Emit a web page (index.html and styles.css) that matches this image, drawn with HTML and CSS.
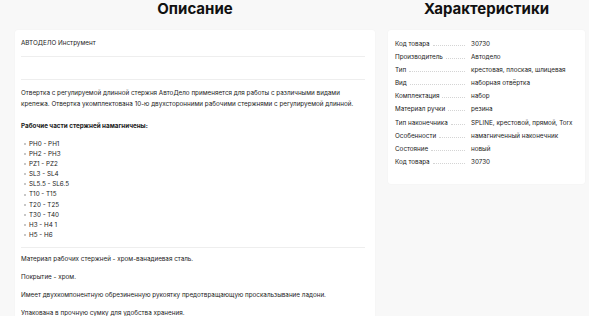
FILE: index.html
```html
<!DOCTYPE html>
<html lang="ru">
<head>
  <meta charset="UTF-8">
  <meta name="viewport" content="width=device-width, initial-scale=1.0">
  <title>Описание и характеристики</title>
  <link rel="stylesheet" href="styles.css">
</head>
<body>
<div class="page">
  <!-- Описание -->
  <div class="col col-desc">
    <h2>Описание</h2>
    <div class="card desc">
      <div class="brand">АВТОДЕЛО Инструмент</div>
      <div class="empty"></div>
      <p class="intro">Отвертка с регулируемой длинной стержня АвтоДело применяется для работы с различными видами крепежа. Отвертка укомплектована 10-ю двухсторонними рабочими стержнями с регулируемой длинной.</p>
      <p class="sub">Рабочие части стержней намагничены:</p>
      <ul class="bits">
        <li>PH0 - PH1</li>
        <li>PH2 - PH3</li>
        <li>PZ1 - PZ2</li>
        <li>SL3 - SL4</li>
        <li>SL5.5 - SL6.5</li>
        <li>T10 - T15</li>
        <li>T20 - T25</li>
        <li>T30 - T40</li>
        <li>H3 - H4 1</li>
        <li>H5 - H6</li>
      </ul>
      <div class="notes">
        <p>Материал рабочих стержней - хром-ванадиевая сталь.</p>
        <p>Покрытие - хром.</p>
        <p>Имеет двухкомпонентную обрезиненную рукоятку предотвращающую проскальзывание ладони.</p>
        <p>Упакована в прочную сумку для удобства хранения.</p>
      </div>
    </div>
  </div>

  <!-- Характеристики -->
  <div class="col col-specs">
    <h2>Характеристики</h2>
    <div class="card specs">
      <div class="row"><span class="key">Код товара</span><span class="val">30730</span></div>
      <div class="row"><span class="key">Производитель</span><span class="val">Автодело</span></div>
      <div class="row"><span class="key">Тип</span><span class="val">крестовая, плоская, шлицевая</span></div>
      <div class="row"><span class="key">Вид</span><span class="val">наборная отвёртка</span></div>
      <div class="row"><span class="key">Комплектация</span><span class="val">набор</span></div>
      <div class="row"><span class="key">Материал ручки</span><span class="val">резина</span></div>
      <div class="row"><span class="key">Тип наконечника</span><span class="val">SPLINE, крестовой, прямой, Torx</span></div>
      <div class="row"><span class="key">Особенности</span><span class="val">намагниченный наконечник</span></div>
      <div class="row"><span class="key">Состояние</span><span class="val">новый</span></div>
      <div class="row"><span class="key">Код товара</span><span class="val">30730</span></div>
    </div>
  </div>
</div>
</body>
</html>
```

FILE: styles.css
```css
body {
  margin: 0;
  background: #f8f8f8;
  font-family: Inter, "Noto Sans", sans-serif;
  color: #222;
  font-size: 6.3px;
}
.page {
  display: flex;
  gap: 13px;
  padding: 0 4px 0 15px;
}
.col-desc {
  width: 360px;
}
.col-specs {
  width: 197px;
}
h2 {
  margin: 0;
  height: 30px;
  line-height: 17px;
  font-size: 15px;
  font-weight: 700;
  text-align: center;
  color: #111;
}
.card {
  background: #fff;
  border-radius: 3px;
  box-shadow: 0 0 2px rgba(0, 0, 0, 0.04);
}
.desc {
  padding: 8px 10px 0 6px;
}
.brand {
  line-height: 10px;
  padding-bottom: 8px;
  border-bottom: 1px solid #eeeeee;
}
.empty {
  height: 22px;
  border-bottom: 1px solid #eeeeee;
}
p {
  margin: 0;
}
.intro {
  margin-top: 8px;
  line-height: 11px;
}
.sub {
  margin-top: 11px;
  font-weight: 700;
  line-height: 11px;
}
.bits {
  list-style: none;
  margin: 7px 0 0;
  padding: 0 0 7px 3px;
  border-bottom: 1px solid #eeeeee;
}
.bits li {
  line-height: 10.1px;
  display: flex;
  align-items: center;
  gap: 3px;
}
.bits li::before {
  content: "";
  width: 2px;
  height: 2px;
  border-radius: 50%;
  background: #b5b5b5;
}
.notes {
  padding: 6px 0 4px;
}
.notes p {
  line-height: 10px;
  margin-bottom: 8px;
}
.specs {
  padding: 8px 8px 15px 7px;
}
.row {
  display: flex;
  align-items: baseline;
  line-height: 13.1px;
}
.key {
  width: 76px;
  display: flex;
  align-items: baseline;
  flex-shrink: 0;
}
.key::after {
  content: "";
  flex: 1;
  margin: 0 6px 0 3px;
  border-bottom: 1px dotted #d4d4d4;
}
.val {
  white-space: nowrap;
}
```
